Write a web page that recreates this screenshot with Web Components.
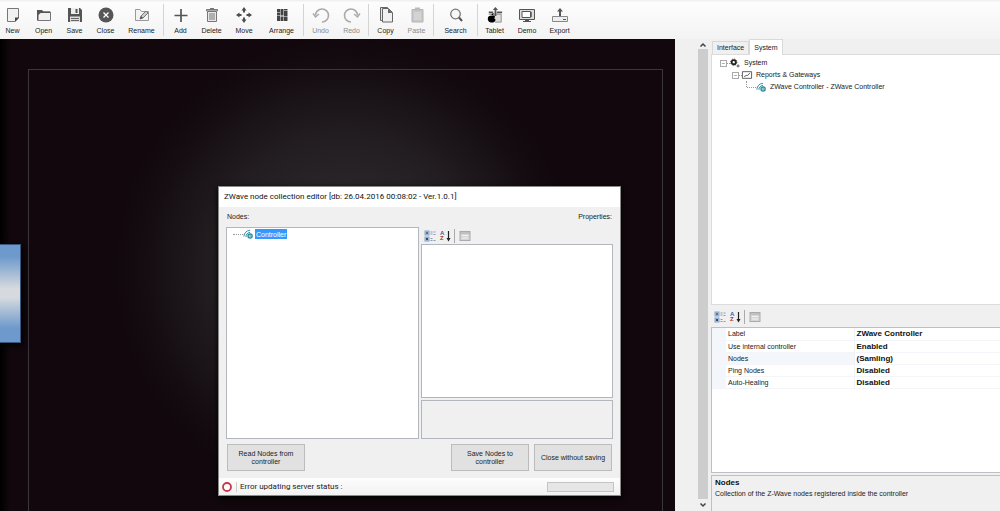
<!DOCTYPE html>
<html lang="en">
<head>
<meta charset="utf-8">
<title>Project editor</title>
<style>
  html, body { margin: 0; height: 100%; }
  body { font: 7px/12px "Liberation Sans", Arial, sans-serif; color: #222; background: #f0f0f0; }
</style>
</head>
<body>
<app-shell>
  <tool-bar slot="toolbar">
    <tool-item icon="new">New</tool-item>
    <tool-item icon="open">Open</tool-item>
    <tool-item icon="save">Save</tool-item>
    <tool-item icon="close">Close</tool-item>
    <tool-item icon="rename" size="wide">Rename</tool-item>
    <tool-separator></tool-separator>
    <tool-item icon="add">Add</tool-item>
    <tool-item icon="delete">Delete</tool-item>
    <tool-item icon="move" size="medium">Move</tool-item>
    <tool-item icon="arrange" size="wide">Arrange</tool-item>
    <tool-separator></tool-separator>
    <tool-item icon="undo" disabled>Undo</tool-item>
    <tool-item icon="redo" disabled>Redo</tool-item>
    <tool-separator></tool-separator>
    <tool-item icon="copy">Copy</tool-item>
    <tool-item icon="paste" disabled>Paste</tool-item>
    <tool-separator></tool-separator>
    <tool-item icon="search" size="wide">Search</tool-item>
    <tool-separator></tool-separator>
    <tool-item icon="tablet">Tablet</tool-item>
    <tool-item icon="demo" size="medium">Demo</tool-item>
    <tool-item icon="export">Export</tool-item>
  </tool-bar>
  <design-stage slot="stage">
    <node-dialog></node-dialog>
  </design-stage>
  <scroll-rail slot="rail"></scroll-rail>
  <side-panel slot="side"></side-panel>
</app-shell>

<script>
const ICONS = {
  new: ['0 0 16 16', '<path d="M2.500 1.500h11v9.500l-3.500 3.500h-7.500z" fill="#f1f1f1" stroke="#777"/><path d="M14 10.500h-4v4.500z" fill="#444"/>'],
  open: ['0 0 16 16', '<path d="M1.500 13.500v-10h4l1.500 1.500h7.500v8.500z" fill="#f1f1f1" stroke="#777"/><path d="M1 13V3h5l1.500 1.500H14V6H4.500L2.500 8v5z" fill="#555"/>'],
  save: ['0 0 16 16', '<path d="M1 1h12l2 2v12H1z" fill="#555"/><path d="M4 1h8v6H4z" fill="#eee"/><path d="M8.500 2h2v4h-2z" fill="#555"/><path d="M3 9.500h10V15H3z" fill="#ddd"/><path d="M4 11h8v1H4zm0 2h8v1H4z" fill="#666"/>'],
  close: ['0 0 16 16', '<circle cx="8" cy="8" r="7.500" fill="#565656"/><path d="M5.500 5.500l5 5m0-5l-5 5" stroke="#fff" stroke-width="1.300"/>'],
  rename: ['0 0 16 16', '<path d="M1.500 13.500v-11h4.500l1.500 2h7v9z" fill="#f3f3f3" stroke="#999"/><path d="M6 12l1-3 5-5 2 2-5 5z" fill="#ccc" stroke="#777"/><path d="M6 12l1-3 2 2z" fill="#555"/>'],
  add: ['0 0 16 16', '<path d="M8 2v13M1.500 8.500h13" stroke="#555" stroke-width="1.700"/>'],
  delete: ['0 0 16 16', '<path d="M3.500 4.500h9v10h-9z" fill="#e8e8e8" stroke="#777"/><path d="M2.500 2.500h11v1.500h-11z" fill="#ddd" stroke="#777"/><path d="M6 1.500h4M6 6v7M8 6v7M10 6v7" stroke="#777"/>'],
  move: ['0 0 16 16', '<path d="M8 0l2.500 3.500H9v2H7v-2H5.500zM8 16l2.500-3.500H9v-2H7v2H5.500zM0 8l3.500-2.500V7h2v2h-2v1.500zM16 8l-3.500-2.500V7h-2v2h2v1.500z" fill="#4d4d4d"/>'],
  arrange: ['0 0 16 16', '<path d="M3 2h3v3H3zm0 3.500h3v3H3zm0 3.500h3v5H3zM6.500 2h3v6h-3zm0 6.500h3v1h-3zm0 1.500h3v4h-3zM10 2h3.500v1.500H10zm0 2h3.500v5H10zm0 5.500h3.500V14H10z" fill="#444"/>'],
  undo: ['0 0 16 16', '<path d="M2.500 8.500A6.500 6.500 0 1 1 9 15" fill="none" stroke="#aaa" stroke-width="1.600"/><path d="M0 6.500l2.500 3.500L6 7" fill="none" stroke="#aaa" stroke-width="1.300"/>'],
  redo: ['0 0 16 16', '<path d="M13.500 8.500A6.500 6.500 0 1 0 7 15" fill="none" stroke="#aaa" stroke-width="1.600"/><path d="M16 6.500L13.500 10 10 7" fill="none" stroke="#aaa" stroke-width="1.300"/>'],
  copy: ['0 0 16 16', '<path d="M2.500.5h7v13h-7z" fill="#e8e8e8" stroke="#666"/><path d="M4.500 1.500h6l4 4v9.500h-10z" fill="#f1f1f1" stroke="#666"/><path d="M10 1.500l4.500 4.500H10z" fill="#666"/>'],
  paste: ['0 0 16 16', '<path d="M3 2.500h11v12.500H3z" fill="#c9c9c9" stroke="#b4b4b4"/><path d="M6 .500h5v3H6z" fill="#bbb"/><path d="M5 5h7v8H5z" fill="#d3d3d3"/>'],
  search: ['0 0 16 16', '<circle cx="7.500" cy="7" r="4.800" fill="#f7f7f7" stroke="#777" stroke-width="1.300"/><path d="M11 10.500l3 3.500" stroke="#555" stroke-width="2"/>'],
  tablet: ['0 0 18 18', '<path d="M2 5h5v2H2zM11 5h6v2h-6z" fill="#555"/><path d="M2 8h14v9H9" fill="#ddd" stroke="#888"/><path d="M9.500 0l3 3.500h-2V10H8.500V3.500h-2z" fill="#555"/><path d="M5 10.200c1-1 4-.8 4 1-1.200 1-.8 2.300.7 3C9 17 7.500 18 5.500 17.300 2.500 18.500.5 15 1 12.500 1.500 10 3.500 9.500 5 10.200zM5 9.500c0-1.500 1-2.500 2.500-2.500 0 1.500-1 2.500-2.500 2.500z" fill="#000"/>'],
  demo: ['0 0 16 16', '<path d="M.5 2.500h15v10H.5z" fill="#ddd" stroke="#555"/><path d="M3 4.500h8.500v6H3z" fill="#fff" stroke="#555"/><path d="M12.500 5v5" stroke="#777"/><path d="M6 13h4v1h2v1H4v-1h2z" fill="#555"/>'],
  export: ['0 0 16 16', '<path d="M.500 9.500h15v5H.500z" fill="#eee" stroke="#888"/><path d="M11 12.500h3" stroke="#555"/><path d="M8 1l3 3.500H9V9H7V4.500H5z" fill="#555"/>'],
  gears: ['0 0 12 12', '<circle cx="4.500" cy="5" r="2.500" fill="none" stroke="#222" stroke-width="2.200"/><circle cx="4.500" cy="5" r="3.800" fill="none" stroke="#222" stroke-dasharray="1.500 1.480"/><circle cx="9.700" cy="9.500" r="1.200" fill="none" stroke="#333"/>'],
  report: ['0 0 12 12', '<path d="M.500 2h11v8H.500z" fill="#fff" stroke="#444"/><path d="M2.500 8l2.500-1.500 2 0 2.500-3" fill="none" stroke="#444"/>'],
  zwave: ['0 0 12 12', '<path d="M1 9C1.500 4.500 4 2 8.500 1.500M3.500 9.500C3.500 6.500 5.500 4.500 8.500 4" fill="none" stroke="#2d93a5" stroke-width="1.200"/><circle cx="8.500" cy="8.500" r="2.500" fill="#d5eef0" stroke="#2d8c9e" stroke-width="1.600"/><path d="M8.500 7v3" stroke="#2d8c9e"/>'],
  category: ['0 0 12 12', '<rect x="1" y="1" width="4" height="4" fill="#a9c4e2" stroke="#86a5ca"/><rect x="1" y="7" width="4" height="4" fill="#a9c4e2" stroke="#86a5ca"/><path d="M2 3h2M2 9h2M3 8v2" stroke="#123"/><path d="M6.500 2h2M6.500 4h2M6.500 8.500h2M6.500 10.500h2M9.500 2h2M9.500 4.500h2M9.500 10.500h2" stroke="#8a9cb0"/>'],
  sort: ['0 0 12 12', '<text x="1" y="5" font-size="6" fill="#3264b4" font-weight="bold">A</text><text x="1" y="10" font-size="6" fill="#a03434" font-weight="bold">Z</text><path d="M9.500 1v8" stroke="#222" stroke-width="1.200"/><path d="M7.500 8h4l-2 3.500z" fill="#222"/>'],
  pages: ['0 0 12 12', '<rect x="1" y="1.500" width="10" height="9" fill="#d6d6d6" stroke="#aaa"/><path d="M1 3h10" stroke="#aaa"/><path d="M3 5.500h6M3 8h6" stroke="#f2f2f2"/>'],
  error: ['0 0 12 12', '<circle cx="6" cy="6" r="4" fill="#fff" stroke="#c83848" stroke-width="1.800"/>'],
  up: ['0 0 12 12', '<path d="M3.500 7.500L6 5l2.500 2.500" fill="none" stroke="#444" stroke-width="1.500"/>'],
  down: ['0 0 12 12', '<path d="M3.500 4.500L6 7l2.500-2.500" fill="none" stroke="#444" stroke-width="1.500"/>']
};

function define(name, html, setup) {
  const template = document.createElement('template');
  template.innerHTML = html;
  customElements.define(name, class extends HTMLElement {
    constructor() {
      super();
      this.attachShadow({ mode: 'open' }).append(template.content.cloneNode(true));
    }
    connectedCallback() { if (setup) setup(this, this.shadowRoot); }
  });
}

define('ui-icon', `
  <style>
    :host { display: block; width: 12px; height: 12px; flex: none; }
    svg { display: block; width: 100%; height: 100%; overflow: visible; }
  </style>
  <svg aria-hidden="true"></svg>`, (host, root) => {
  const icon = ICONS[host.getAttribute('name')];
  if (!icon) return;
  const svg = root.querySelector('svg');
  svg.setAttribute('viewBox', icon[0]);
  svg.innerHTML = icon[1];
});

define('app-shell', `
  <style>
    :host { display: grid; min-height: 100vh; grid-template: auto minmax(0, 1fr) / minmax(0, 1fr) 36px 289px; }
    .top { grid-column: 1 / -1; }
    .cell { display: grid; min-height: 0; }
  </style>
  <header class="top"><slot name="toolbar"></slot></header>
  <main class="cell"><slot name="stage"></slot></main>
  <div class="cell"><slot name="rail"></slot></div>
  <aside class="cell"><slot name="side"></slot></aside>`);

define('tool-bar', `
  <style>
    :host { display: block; background: linear-gradient(#f0f0f0 1px, #fdfdfd 2px, #f3f3f3); }
    nav { display: flex; height: 39px; margin-left: -3px; }
  </style>
  <nav aria-label="Main"><slot></slot></nav>`);

define('tool-separator', `
  <style>
    :host { display: block; width: 1px; margin: 4px 1px 3px; background: #d4d4d4; }
  </style>`);

define('tool-item', `
  <style>
    :host { display: block; width: 31px; }
    :host([size="medium"]) { width: 34px; }
    :host([size="wide"]) { width: 41px; }
    button { display: flex; flex-direction: column; align-items: center; gap: 2px; width: 100%; height: 100%;
      padding: 7px 0 0; border: 0; background: none; font: inherit; color: #222; white-space: nowrap; }
    button:disabled { color: #8c8c8c; }
    ui-icon { width: 16px; height: 16px; }
  </style>
  <button type="button"><span><slot></slot></span></button>`, (host, root) => {
  const button = root.querySelector('button');
  button.disabled = host.hasAttribute('disabled');
  const icon = document.createElement('ui-icon');
  icon.setAttribute('name', host.getAttribute('icon'));
  button.prepend(icon);
});

define('design-stage', `
  <style>
    :host { display: block; position: relative; overflow: hidden;
      background: radial-gradient(circle 232px at 345px 230px, #343034 0, #2d282b 25%, #221d20 58%, #150d12 85%, #11070c 100%); }
    .page { position: absolute; inset: 30px 12px -4px 28px; border: 1px solid #3a363a; }
    .edge { position: absolute; inset: 0 auto 0 0; width: 10px; background: linear-gradient(90deg, #000, transparent); }
    .tile { position: absolute; left: 0; top: 205px; width: 21px; height: 99px; box-sizing: border-box;
      background: linear-gradient(#6d99cc 12%, #d6dade 45%, #d6dade 54%, #6d99cc 86%);
      border: solid #38577c; border-width: 1px 1px 1px 0; box-shadow: 2px 2px 5px #000; }
    ::slotted(node-dialog) { position: absolute; left: 218px; top: 147px; }
  </style>
  <div class="page"></div><div class="edge"></div><div class="tile"></div>
  <slot></slot>`);

define('scroll-rail', `
  <style>
    :host { display: flex; flex-direction: column; align-items: center; width: 10px; margin-left: 23px; }
    .thumb { flex: 1; width: 10px; background: #cdcdcd; }
    .up { margin-bottom: -2px; }
  </style>
  <ui-icon class="up" name="up"></ui-icon><div class="thumb"></div><ui-icon name="down"></ui-icon>`);

define('grid-tools', `
  <style>
    :host { display: flex; align-items: center; gap: 3px; padding: 0 3px; }
    button { display: block; border: 0; padding: 0; background: none; font: inherit; }
    i { width: 1px; height: 14px; background: #aaa; }
    .last { margin-left: 1px; }
  </style>
  <button type="button" aria-label="Categorized"><ui-icon name="category"></ui-icon></button>
  <button type="button" aria-label="Alphabetical"><ui-icon name="sort"></ui-icon></button>
  <i></i>
  <button type="button" class="last" aria-label="Property pages" disabled><ui-icon name="pages"></ui-icon></button>`);

define('tree-row', `
  <style>
    :host { display: flex; align-items: center; height: 12px; gap: 4px; white-space: nowrap; }
    .stem { display: flex; align-items: center; width: 10px; height: 12px; }
    .stem::after { content: ""; flex: 1; border-top: 1px dotted #999; }
    :host([open]) .stem::before { content: "−"; box-sizing: border-box; width: 7px; height: 7px;
      font: 6px/5px "Liberation Sans", sans-serif; text-align: center; color: #345; background: #fff; border: 1px solid #aaa; }
    :host([hook]) .stem::before { content: ""; align-self: flex-start; height: 6px; border-left: 1px dotted #999; }
    .node { display: flex; align-items: center; }
    ::slotted(ui-icon) { width: 10px; height: 10px; }
    :host([selected]) { gap: 2px; }
    :host([selected]) .text { background: #3399ff; color: #fff; padding: 0 1px; height: 10px; line-height: 11px; }
  </style>
  <span class="node"><span class="stem"></span><slot name="icon"></slot></span>
  <span class="text"><slot></slot></span>`);

define('side-panel', `
  <style>
    :host { display: flex; flex-direction: column; min-width: 0; }
    .tabs { display: flex; align-items: flex-end; height: 15px; position: relative; z-index: 1; }
    .tabs button { box-sizing: border-box; height: 13px; padding: 0 4px; border: 1px solid #d9d9d9; border-bottom: 0;
      background: #f0f0f0; font: inherit; line-height: 12px; color: #222; margin-left: 1px; }
    .tabs button[aria-selected="true"] { height: 16px; margin: 0 0 -1px; background: #fff; }
    .tree { flex: 1; box-sizing: border-box; padding: 2px 8px; background: #fff; border: solid #dcdcdc; border-width: 1px 0 1px 1px; }
    .l2 { margin-left: 12px; }
    .l3 { margin-left: 26px; }
    grid-tools { height: 21px; margin-top: 1px; }
    .grid { height: 146px; box-sizing: border-box; background: #fff; border: solid #bdbfc6; border-width: 1px 0 1px 1px; }
    table { width: 100%; border-collapse: collapse; table-layout: fixed; }
    tr { height: 12px; }
    td, th { padding: 0 2px; line-height: 11px; height: 11px; font-weight: normal; text-align: left; border-bottom: 1px solid #f4f5f8; }
    .gutter { width: 14px; background: #f3f6fb; padding: 0; }
    .name { width: 128px; box-sizing: border-box; }
    .current { background: #f3f6fb; }
    .value { font-weight: bold; font-size: 8px; color: #111; border-left: 1px solid #f0f2f6; }
    .help { box-sizing: border-box; height: 36px; margin-top: 2px; padding: 1px 3px; border: solid #bdbfc6; border-width: 1px 0 0 1px; }
    .help h2 { margin: 0; font-size: 8px; line-height: 11px; color: #111; }
    .help p { margin: 0; }
  </style>
  <div class="tabs" role="tablist">
    <button type="button" role="tab" aria-selected="false">Interface</button>
    <button type="button" role="tab" aria-selected="true">System</button>
  </div>
  <div class="tree">
    <tree-row open><ui-icon slot="icon" name="gears"></ui-icon>System</tree-row>
    <tree-row open class="l2"><ui-icon slot="icon" name="report"></ui-icon>Reports &amp; Gateways</tree-row>
    <tree-row hook class="l3"><ui-icon slot="icon" name="zwave"></ui-icon>ZWave Controller - ZWave Controller</tree-row>
  </div>
  <grid-tools></grid-tools>
  <div class="grid">
    <table>
      <tr><td class="gutter"></td><th scope="row" class="name">Label</th><td class="value">ZWave Controller</td></tr>
      <tr><td class="gutter"></td><th scope="row" class="name">Use internal controller</th><td class="value">Enabled</td></tr>
      <tr><td class="gutter"></td><th scope="row" class="name current">Nodes</th><td class="value">(Samling)</td></tr>
      <tr><td class="gutter"></td><th scope="row" class="name">Ping Nodes</th><td class="value">Disabled</td></tr>
      <tr><td class="gutter"></td><th scope="row" class="name">Auto-Healing</th><td class="value">Disabled</td></tr>
    </table>
  </div>
  <section class="help"><h2>Nodes</h2><p>Collection of the Z-Wave nodes registered inside the controller</p></section>`);

define('push-button', `
  <style>
    :host { display: block; width: 78px; height: 27px; }
    button { box-sizing: border-box; width: 100%; height: 100%; padding: 0 4px; border: 1px solid #bcbcbc; background: #e1e1e1;
      font: inherit; line-height: 8px; color: #222; }
  </style>
  <button type="button"><slot></slot></button>`);

define('node-dialog', `
  <style>
    :host { display: block; box-sizing: border-box; width: 403px; background: #f0f0f0; border: 1px solid #8a8a8a;
      box-shadow: 0 2px 6px #000; font-family: "Liberation Sans", sans-serif; }
    h1 { margin: 0; padding: 0 5px; height: 20px; font: 8px/20px Roboto, sans-serif; color: #111; background: #fff; }
    .body { display: grid; grid-template: 20px 212px / 193px minmax(0, 1fr); column-gap: 2px; padding: 0 7px; }
    .cap { line-height: 20px; padding: 0 1px; }
    .right { text-align: right; }
    .box { box-sizing: border-box; border: 1px solid #b4b6bd; }
    .white { background: #fff; }
    .tree { padding: 0 6px; }
    .props { display: grid; grid-template-rows: 17px minmax(0, 1fr) 41px; }
    .desc { margin-top: 2px; }
    .actions { display: flex; gap: 5px; padding: 5px 8px 7px; }
    .actions :first-child { margin-right: auto; }
    footer { display: flex; align-items: center; gap: 3px; height: 17px; padding: 0 6px 0 2px;
      background: linear-gradient(#fdfdfd, #f1f1f1); font-family: Roboto, sans-serif; font-size: 8px; }
    footer i { width: 1px; height: 10px; background: #ccc; }
    footer .meter { box-sizing: border-box; width: 67px; height: 10px; margin-left: auto; background: #e6e6e6; border: 1px solid #c4c4c4; }
  </style>
  <section role="dialog" aria-labelledby="title">
    <h1 id="title">ZWave node collection editor [db: 26.04.2016 00:08:02 - Ver.1.0.1]</h1>
    <div class="body">
      <span class="cap">Nodes:</span><span class="cap right">Properties:</span>
      <div class="box white tree"><tree-row selected><ui-icon slot="icon" name="zwave"></ui-icon>Controller</tree-row></div>
      <div class="props"><grid-tools></grid-tools><div class="box white"></div><div class="box desc"></div></div>
    </div>
    <div class="actions">
      <push-button>Read Nodes from controller</push-button>
      <push-button>Save Nodes to controller</push-button>
      <push-button>Close without saving</push-button>
    </div>
    <footer><ui-icon name="error"></ui-icon><i></i><span>Error updating server status :</span><div class="meter"></div></footer>
  </section>`);
</script>
</body>
</html>
